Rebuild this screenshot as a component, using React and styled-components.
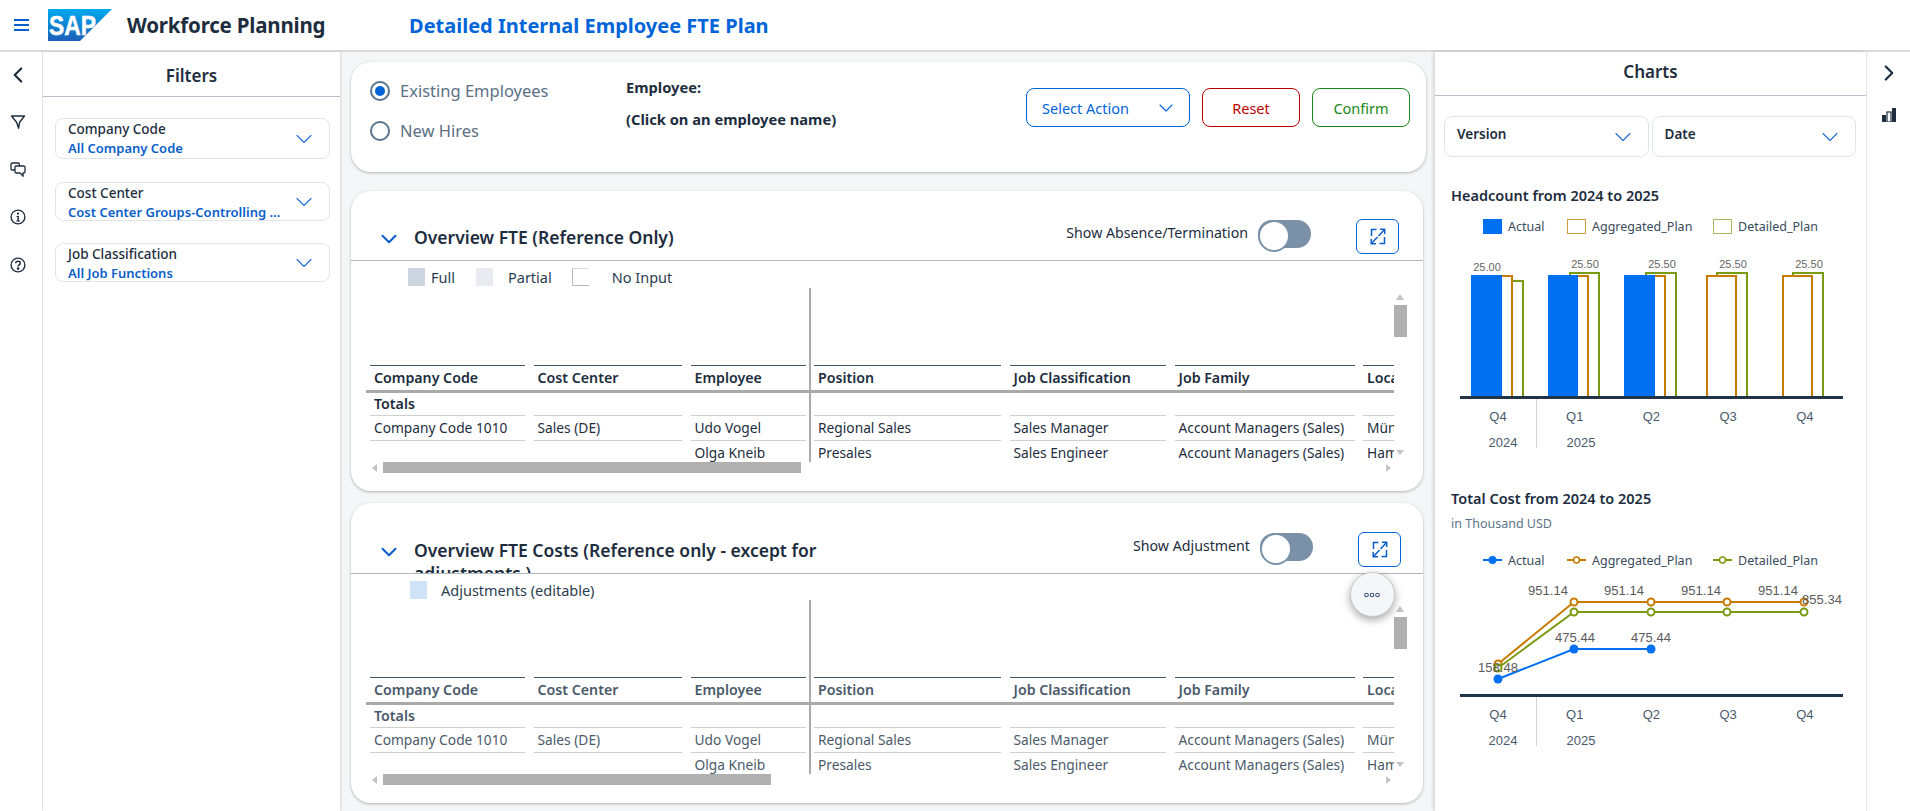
import React from "react";
import styled, { createGlobalStyle } from "styled-components";
import { ChevronLeft, ChevronRight, ChevronDown } from "lucide-react";

const Global = createGlobalStyle`
  html, body { margin: 0; padding: 0; height: 100%; background: #fff; }
  * { box-sizing: border-box; }
  body { font-family: "Noto Sans", "Open Sans", Arial, sans-serif; color: #1d2d3e; }
`;

const Page = styled.div`
  width: 1910px; height: 811px; overflow: hidden;
  display: flex; flex-direction: column; background: #fff;
`;
const TopBar = styled.header`
  height: 52px; flex: none; display: flex; align-items: center;
  border-bottom: 2px solid #d9d9d9; padding-left: 14px; background: #fff;
`;
const Burger = styled.div`
  width: 15px; display: flex; flex-direction: column; gap: 3px; margin-right: 19px;
  span { height: 2px; background: #0a5ecb; display: block; }
`;
const AppName = styled.div`
  margin-left: 15px; width: 282px; font-size: 20.5px; font-weight: 700; letter-spacing: -0.2px; color: #1d2d3e; white-space: nowrap;
`;
const PageTitle = styled.div`
  font-size: 20px; font-weight: 700; color: #0064d9; white-space: nowrap;
`;
const Body = styled.div`
  flex: 1; display: flex; min-height: 0;
`;
const Rail = styled.nav`
  flex: none; width: ${p => p.$w}px; background: #fff;
  display: flex; flex-direction: column; align-items: center;
  border-${p => p.$side}: 1px solid #e5e5e5; padding-top: ${p => p.$top}px; padding-right: ${p => p.$pr || 0}px; color: #1d2d3e;
`;
const RailIcon = styled.div`
  height: ${p => p.$h || 48}px; display: flex; align-items: flex-start; justify-content: center;
`;
const SidePanel = styled.aside`
  flex: none; width: ${p => p.$w}px; background: #fff; display: flex; flex-direction: column;
  ${p => p.$shadow ? "box-shadow: -2px 0 3px rgba(0,0,0,.12);" : "box-shadow: 1px 0 2px rgba(0,0,0,.12);"}
  position: relative;
`;
const PanelTitle = styled.div`
  height: ${p => p.$h}px; flex: none; border-bottom: 1px solid #b6c0cb;
  display: flex; align-items: center; justify-content: center;
  padding: ${p => p.$pt || 0}px 0 ${p => p.$pb || 0}px;
  font-size: 17px; font-weight: 600; color: #1d2d3e;
`;
const FilterList = styled.div`
  padding: 21px 10px 0 12px; display: flex; flex-direction: column; gap: 22px;
`;
const FilterBox = styled.div`
  height: ${p => p.$h}px; margin-bottom: ${p => p.$mb || 0}px; border: 1px solid #e1e4e8; border-radius: 8px; background: #fff;
  padding: ${p => p.$pt}px 12px 0 12px; position: relative; overflow: hidden;
  line-height: 19px; font-size: 13px;
`;
const FilterLabel = styled.div`
  font-weight: 500; font-size: 13.5px; color: #1d2d3e; white-space: nowrap;
`;
const FilterValue = styled.div`
  font-weight: 600; color: #0a5ecb; white-space: nowrap;
`;
const Caret = styled(ChevronDown)`
  position: absolute; right: ${p => p.$r || 11}px; top: 50%; margin-top: -14px; color: #2a6fd8;
`;
const Main = styled.main`
  flex: 1; min-width: 0; background: #f5f6f7; padding: 10px 9px 0 11px;
  display: flex; flex-direction: column;
`;
const Card = styled.section`
  background: #fff; border-radius: 20px; box-shadow: 0 1px 3px rgba(0,0,0,.28);
  flex: none; height: ${p => p.$h}px; margin: 0 ${p => p.$mr || 0}px ${p => p.$mb || 0}px 0; position: relative;
`;
const ActionCard = styled(Card)`
  display: flex; padding: 0 16px 0 19px;
`;
const RadioCol = styled.div`
  width: 256px; flex: none; padding-top: 18px; display: flex; flex-direction: column; gap: 19px;
`;
const RadioRow = styled.label`
  display: flex; align-items: center; gap: 10px; height: 21px;
  font-size: 16.5px; color: #5b6f85; white-space: nowrap;
`;
const RadioDot = styled.span`
  width: 20px; height: 20px; border-radius: 50%; border: 2px solid #5b738b; flex: none;
  display: flex; align-items: center; justify-content: center;
  &::after { content: ""; width: 10px; height: 10px; border-radius: 50%; background: ${p => p.$on ? "#0064d9" : "transparent"}; }
`;
const EmployeeCol = styled.div`
  flex: 1; padding-top: 16px; font-size: 14.7px; font-weight: 700; color: #1d2d3e;
  display: flex; flex-direction: column; gap: 13px; line-height: 19px; white-space: nowrap;
`;
const Actions = styled.div`
  display: flex; gap: 12px; padding-top: 26px; flex: none;
`;
const ActionBtn = styled.button`
  height: 39px; width: ${p => p.$w}px; border: 1px solid ${p => p.$c}; border-radius: 8px; background: #fff;
  color: ${p => p.$c}; font: 400 14.5px "Noto Sans", sans-serif; padding: 0;
  display: flex; align-items: center; justify-content: ${p => p.$split ? "space-between" : "center"};
  ${p => p.$split && "padding: 0 11px 0 15px;"}
`;
const CardHead = styled.div`
  height: ${p => p.$h}px; border-bottom: 1px solid #aeb8c3; display: flex; align-items: flex-start;
  padding: ${p => p.$top}px ${p => p.$r}px 0 25px; overflow: hidden;
`;
const Collapse = styled(ChevronDown)`
  flex: none; color: #0a5ecb; margin: 7px 12px 0 0;
`;
const SectionTitle = styled.h2`
  margin: 0; padding-top: 7px; width: 470px; font-size: 17.5px; font-weight: 600; line-height: 23px; color: #1d2d3e;
`;
const HeadRight = styled.div`
  margin-left: auto; display: flex; align-items: flex-start; gap: 45px; flex: none;
`;
const ToggleGroup = styled.div`
  display: flex; align-items: flex-start; gap: 10px; padding-top: 1px;
  font-size: 14.2px; color: #1d2d3e; line-height: 26px; white-space: nowrap;
`;
const Toggle = styled.span`
  width: 53px; height: 28px; border-radius: 14px; background: #7b91a8; display: block; position: relative; flex: none;
  &::after { content: ""; position: absolute; left: 0; top: 0; width: 28px; height: 28px; border-radius: 50%; background: #fff; border: 2px solid #7b91a8; }
`;
const ExpandBtn = styled.button`
  width: 43px; height: 35px; border: 1px solid #0064d9; border-radius: 6px; background: #fff; padding: 0;
  display: flex; align-items: center; justify-content: center;
`;
const Legend = styled.div`
  height: ${p => p.$h}px; display: flex; align-items: flex-start; padding: 7px 0 0 ${p => p.$l}px; line-height: 18px;
  font-size: 14.5px; color: #2b3d50;
`;
const LegendItem = styled.span`
  display: flex; align-items: center; gap: ${p => p.$gap}px; margin-right: ${p => p.$mr || 0}px; white-space: nowrap;
`;
const Swatch = styled.i`
  width: 17px; height: 18px; display: block; background: ${p => p.$bg};
  ${p => p.$open && "border-left: 1px solid #aeb8c3; border-bottom: 1px solid #aeb8c3; border-top: 1px solid #d5dae0;"}
`;
const TableWrap = styled.div`
  position: relative; height: 185px; margin-left: 15px; width: 1045px;
`;
const Frame = styled.div`
  height: 174px; width: 1028px; overflow: hidden; padding-top: 77px;
`;
const Row = styled.div`
  display: grid; grid-template-columns: 155px 148.5px 115px 187px 156.5px 180px 32px; column-gap: 8.5px;
  padding-left: 4px; height: ${p => p.$h}px;
`;
const Cell = styled.div`
  font-size: ${p => p.$b ? 14.2 : 13.75}px; font-weight: ${p => p.$b ? 600 : 400}; color: ${p => p.$dim ? "#4b5a6a" : "#1d2d3e"};
  border-top: ${p => p.$line}; padding: 0 0 2px 4px; overflow: hidden; white-space: nowrap;
  display: flex; align-items: center;
`;
const HeavyRule = styled.div`
  height: 3px; background: #aaaaaa; width: 1028px;
`;
const FreezeLine = styled.div`
  position: absolute; left: 442.5px; top: 0; width: 2px; height: 174px; background: #aaaaaa;
`;
const HThumb = styled.div`
  position: absolute; left: 17px; top: 174px; height: 11px; background: #b0b0b0;
`;
const VThumb = styled.div`
  position: absolute; left: 1028px; top: 17px; width: 13px; height: 32px; background: #b0b0b0;
`;
const ScrollArrow = styled.i`
  position: absolute; left: ${p => p.$x}px; top: ${p => p.$y}px; width: 0; height: 0; display: block;
  ${p => ({
    up: "border-left: 4px solid transparent; border-right: 4px solid transparent; border-bottom: 6px solid #c4c4c4;",
    down: "border-left: 4px solid transparent; border-right: 4px solid transparent; border-top: 5px solid #c4c4c4;",
    left: "border-top: 4px solid transparent; border-bottom: 4px solid transparent; border-right: 5px solid #c4c4c4;",
    right: "border-top: 4px solid transparent; border-bottom: 4px solid transparent; border-left: 5px solid #c4c4c4;",
  }[p.$dir])}
`;
const Fab = styled.button`
  position: absolute; right: 28.5px; top: 69px; width: 45px; height: 45px; border-radius: 50%;
  background: #f5f6f7; border: 1px solid #c9c9c9; box-shadow: 0 3px 8px rgba(0,0,0,.35); padding: 0;
  display: flex; align-items: center; justify-content: center; z-index: 2;
`;
const ChartSelects = styled.div`
  display: flex; gap: 3px; padding: 20px 10px 0 9px;
`;
const ChartSelect = styled.div`
  flex: 1; height: 41px; border: 1px solid #e1e4e8; border-radius: 8px; padding: 9px 12px;
  font-size: 13.5px; font-weight: 600; color: #1d2d3e; position: relative; line-height: 17px;
`;
const ChartBlock = styled.div`
  padding: ${p => p.$top}px 0 0 16px;
`;
const ChartTitle = styled.div`
  font-size: 14.5px; font-weight: 600; color: #1d2d3e; line-height: 20px; white-space: nowrap;
`;
const ChartSub = styled.div`
  font-size: 12.5px; color: #5b738b; line-height: 16px; margin-top: 8px;
`;
const ChartLegend = styled.div`
  display: flex; align-items: center; height: 20px; padding-left: 32px; margin-top: ${p => p.$mt}px;
  font-size: 12.5px; color: #3a4b5c; white-space: nowrap;
`;
const ChartLegendItem = styled.span`
  display: flex; align-items: center; gap: 6px; width: ${p => p.$w}px; flex: none;
`;
const LegendBox = styled.i`
  width: 19px; height: 15px; display: block; flex: none;
  ${p => p.$fill ? `background: ${p.$c};` : `border: 1.5px solid ${p.$c}; background:#fff;`}
`;
const ChartSvg = styled.svg`
  display: block; margin-left: -11px;
  text { font-family: "Liberation Sans", Arial, sans-serif; }
`;

const SapLogo = () => (
  <svg width="64" height="32" viewBox="0 0 64 32" style={{ flex: "none" }}>
    <defs>
      <linearGradient id="sapg" x1="0" y1="0" x2="0" y2="1">
        <stop offset="0" stopColor="#00a9ee" />
        <stop offset="1" stopColor="#1c5fb9" />
      </linearGradient>
    </defs>
    <polygon points="0,0 64,0 32,32 0,32" fill="url(#sapg)" />
    <text x="1" y="26" fontFamily="Liberation Sans" fontWeight="700" fontSize="27" fill="#fff" stroke="#fff" strokeWidth=".5" textLength="47" lengthAdjust="spacingAndGlyphs">SAP</text>
  </svg>
);
const FunnelIcon = () => (
  <svg width="16" height="16" viewBox="0 0 16 16" fill="none" stroke="#1d2d3e" strokeWidth="1.4">
    <path d="M1.5 2h13L9.6 8.2 8.6 14.2 6.6 8.2z" strokeLinejoin="round" />
  </svg>
);
const ChatIcon = () => (
  <svg width="16" height="16" viewBox="0 0 16 16" fill="none" stroke="#1d2d3e" strokeWidth="1.3">
    <path d="M5 9H2.2A1.2 1.2 0 0 1 1 7.8V3.2A1.2 1.2 0 0 1 2.2 2h6A1.2 1.2 0 0 1 9.4 3.2V5" />
    <path d="M6.2 5h7.6A1.2 1.2 0 0 1 15 6.2v4.6a1.2 1.2 0 0 1-1.2 1.2h-.8v3l-3-3H6.2A1.2 1.2 0 0 1 5 10.8V6.2A1.2 1.2 0 0 1 6.2 5z" />
  </svg>
);
const InfoIcon = () => (
  <svg width="16" height="16" viewBox="0 0 16 16">
    <circle cx="8" cy="8" r="6.9" fill="none" stroke="#1d2d3e" strokeWidth="1.4" />
    <circle cx="8" cy="4.7" r="1.1" fill="#1d2d3e" />
    <path d="M6.5 7h2.4v4.4H10v1H6.2v-1h1.2V8H6.5z" fill="#1d2d3e" />
  </svg>
);
const HelpIcon = () => (
  <svg width="16" height="16" viewBox="0 0 16 16" fill="none" stroke="#1d2d3e" strokeWidth="1.4">
    <circle cx="8" cy="8" r="6.9" />
    <path d="M5.7 6.2C5.8 4.9 6.8 4.2 8 4.2c1.3 0 2.3.8 2.3 2 0 1.7-2.2 1.7-2.2 3.4" />
    <circle cx="8.1" cy="11.6" r=".6" fill="#1d2d3e" />
  </svg>
);
const BarsIcon = () => (
  <svg width="14" height="14" viewBox="0 0 14 14">
    <rect x="0" y="7" width="4" height="7" fill="#1d2d3e" />
    <rect x="5" y="4" width="4" height="10" fill="#fff" stroke="#1d2d3e" strokeWidth="1.2" />
    <rect x="10" y="0" width="4" height="14" fill="#1d2d3e" />
  </svg>
);
const ExpandIcon = () => (
  <svg width="16" height="17" viewBox="0 0 16 17" fill="none" stroke="#0a5ecb" strokeWidth="1.5">
    <path d="M6.5 1.5H1.5V8" />
    <path d="M9.5 15.5H14.5V9" />
    <path d="M8.5 8L14.5 1.5M10 1.2h4.7v4.8" />
    <path d="M7.5 9L1.5 15.5M6 15.8H1.2V11" />
  </svg>
);
const Dots = () => (
  <svg width="16" height="6" viewBox="0 0 16 6" fill="none" stroke="#3d5a80" strokeWidth="1.1">
    <circle cx="2.5" cy="3" r="1.8" /><circle cx="8" cy="3" r="1.8" /><circle cx="13.5" cy="3" r="1.8" />
  </svg>
);

const COLS = ["Company Code", "Cost Center", "Employee", "Position", "Job Classification", "Job Family", "Location"];
const ROW1 = ["Company Code 1010", "Sales (DE)", "Udo Vogel", "Regional Sales", "Sales Manager", "Account Managers (Sales)", "München"];
const ROW2 = ["", "", "Olga Kneib", "Presales", "Sales Engineer", "Account Managers (Sales)", "Hamburg"];

const DataTable = ({ thumb, dim }) => (
  <TableWrap>
    <Frame>
      <Row $h={25}>{COLS.map(c => <Cell key={c} $b $dim={dim} $line="1.5px solid #40566d">{c}</Cell>)}</Row>
      <HeavyRule />
      <Row $h={22}>{COLS.map((c, i) => <Cell key={c} $b $dim={dim} $line="0">{i === 0 ? "Totals" : ""}</Cell>)}</Row>
      <Row $h={25}>{ROW1.map((c, i) => <Cell key={i} $dim={dim} $line="1px solid #cfcfcf">{c}</Cell>)}</Row>
      <Row $h={25}>{ROW2.map((c, i) => <Cell key={i} $dim={dim} $line="1px solid #cfcfcf">{c}</Cell>)}</Row>
    </Frame>
    <FreezeLine />
    <VThumb />
    <ScrollArrow $dir="up" $x={1030} $y={6} />
    <ScrollArrow $dir="down" $x={1030} $y={162} />
    <HThumb style={{ width: thumb }} />
    <ScrollArrow $dir="left" $x={6} $y={176} />
    <ScrollArrow $dir="right" $x={1020} $y={176} />
  </TableWrap>
);

const BLUE = "#0070f2", ORANGE = "#c87b00", GREEN = "#7a9a12", AXIS = "#223548";
/* chart-local x = page x - 1440 */
const bars = [
  { a: [31, 62], g: [57, 72], d: [72, 83], dTop: 281 },
  { a: [108, 138], g: [133, 148], d: [130, 159], dTop: 273 },
  { a: [184, 215], g: [209, 225], d: [206, 236], dTop: 273 },
  { g: [267, 296], d: [277, 307], dTop: 273 },
  { g: [343, 372], d: [353, 383], dTop: 273 },
];
const AxisLabels = ({ base }) => (
  <g fontSize="13" fill="#4a5a6a">
    <rect x="20" y={base - 1} width="383" height="3" fill={AXIS} />
    <line x1="96.5" x2="96.5" y1={base + 2} y2={base + 51} stroke="#d5d5d5" />
    {["Q4", "Q1", "Q2", "Q3", "Q4"].map((q, i) => (
      <text key={i} x={58 + i * 76.7} y={base + 24} textAnchor="middle">{q}</text>
    ))}
    <text x="63" y={base + 50} textAnchor="middle">2024</text>
    <text x="141" y={base + 50} textAnchor="middle">2025</text>
  </g>
);
const HeadcountChart = () => {
  const Y = 236, base = 397 - Y;
  return (
    <ChartSvg width="420" height="220" viewBox="0 0 420 220">
      {bars.map((b, i) => (
        <g key={i} fill="#fff" strokeWidth="2">
          <path d={`M${b.d[0]} ${base}V${b.dTop - Y}H${b.d[1]}V${base}`} stroke={GREEN} />
          <path d={`M${b.g[0]} ${base}V${276 - Y}H${b.g[1]}V${base}`} stroke={ORANGE} />
          {b.a && <rect x={b.a[0]} y={275 - Y} width={b.a[1] - b.a[0]} height={base - 275 + Y} fill={BLUE} stroke="none" />}
        </g>
      ))}
      <g fontSize="11" fill="#666" textAnchor="middle">
        <text x="47" y={271 - Y}>25.00</text>
        {[145, 222, 293, 369].map(x => <text key={x} x={x} y={268 - Y}>25.50</text>)}
      </g>
      <AxisLabels base={base} />
    </ChartSvg>
  );
};
const pts = [58, 134, 211, 287, 364];
const Line = ({ ys, color, solid }) => (
  <g>
    <polyline points={ys.map((y, i) => `${pts[i]},${y}`).join(" ")} fill="none" stroke={color} strokeWidth="2" />
    {ys.map((y, i) => (
      <circle key={i} cx={pts[i]} cy={y} r={solid ? 4.5 : 3.5} fill={solid ? color : "#fff"} stroke={color} strokeWidth={solid ? 0 : 2} />
    ))}
  </g>
);
const CostChart = () => {
  const Y = 570;
  const g = [664, 602, 602, 602, 602].map(v => v - Y);
  const d = [668, 612, 612, 612, 612].map(v => v - Y);
  const a = [679, 649, 649].map(v => v - Y);
  return (
    <ChartSvg width="420" height="190" viewBox="0 0 420 190">
      <Line ys={g} color={ORANGE} />
      <Line ys={d} color={GREEN} />
      <Line ys={a} color={BLUE} solid />
      <g fontSize="13" fill="#5a5a5a" textAnchor="middle">
        {[108, 184, 261, 338].map(x => <text key={x} x={x} y={595 - Y}>951.14</text>)}
        <text x="382" y={604 - Y}>855.34</text>
        <text x="135" y={642 - Y}>475.44</text>
        <text x="211" y={642 - Y}>475.44</text>
        <text x="58" y={672 - Y}>158.48</text>
      </g>
      <AxisLabels base={695 - Y} />
    </ChartSvg>
  );
};
const LineKey = ({ c, solid }) => (
  <svg width="19" height="10" viewBox="0 0 19 10" style={{ flex: "none" }}>
    <line x1="0" x2="19" y1="5" y2="5" stroke={c} strokeWidth="2" />
    <circle cx="9.5" cy="5" r={solid ? 4 : 3} fill={solid ? c : "#fff"} stroke={c} strokeWidth={solid ? 0 : 1.5} />
  </svg>
);

export default function App() {
  return (
    <Page>
      <Global />
      <TopBar>
        <Burger><span /><span /><span /></Burger>
        <SapLogo />
        <AppName>Workforce Planning</AppName>
        <PageTitle>Detailed Internal Employee FTE Plan</PageTitle>
      </TopBar>
      <Body>
        <Rail $w={43} $side="right" $top={10} $pr={7}>
          <RailIcon $h={52}><ChevronLeft size={26} strokeWidth={2} /></RailIcon>
          <RailIcon $h={47}><FunnelIcon /></RailIcon>
          <RailIcon $h={48}><ChatIcon /></RailIcon>
          <RailIcon $h={48}><InfoIcon /></RailIcon>
          <RailIcon><HelpIcon /></RailIcon>
        </Rail>
        <SidePanel $w={297}>
          <PanelTitle $h={45} $pt={2}>Filters</PanelTitle>
          <FilterList>
            <FilterBox $h={41} $pt={1} $mb={1}>
              <FilterLabel>Company Code</FilterLabel>
              <FilterValue>All Company Code</FilterValue>
              <Caret size={28} strokeWidth={1} />
            </FilterBox>
            <FilterBox $h={39} $pt={1}>
              <FilterLabel>Cost Center</FilterLabel>
              <FilterValue>Cost Center Groups-Controlling ...</FilterValue>
              <Caret size={28} strokeWidth={1} />
            </FilterBox>
            <FilterBox $h={39} $pt={1}>
              <FilterLabel>Job Classification</FilterLabel>
              <FilterValue>All Job Functions</FilterValue>
              <Caret size={28} strokeWidth={1} />
            </FilterBox>
          </FilterList>
        </SidePanel>
        <Main>
          <ActionCard $h={110} $mb={19}>
            <RadioCol>
              <RadioRow><RadioDot $on />Existing Employees</RadioRow>
              <RadioRow><RadioDot />New Hires</RadioRow>
            </RadioCol>
            <EmployeeCol>
              <div>Employee:</div>
              <div>(Click on an employee name)</div>
            </EmployeeCol>
            <Actions>
              <ActionBtn $w={164} $c="#0064d9" $split>Select Action<ChevronDown size={24} strokeWidth={1.1} /></ActionBtn>
              <ActionBtn $w={98} $c="#bb0000">Reset</ActionBtn>
              <ActionBtn $w={98} $c="#188918">Confirm</ActionBtn>
            </Actions>
          </ActionCard>
          <Card $h={300} $mr={3} $mb={12}>
            <CardHead $h={70} $top={28} $r={24}>
              <Collapse size={26} strokeWidth={1.9} />
              <SectionTitle>Overview FTE (Reference Only)</SectionTitle>
              <HeadRight>
                <ToggleGroup>Show Absence/Termination<Toggle /></ToggleGroup>
                <ExpandBtn><ExpandIcon /></ExpandBtn>
              </HeadRight>
            </CardHead>
            <Legend $h={27} $l={57}>
              <LegendItem $gap={6} $mr={21}><Swatch $bg="#cdd5e0" />Full</LegendItem>
              <LegendItem $gap={15} $mr={20}><Swatch $bg="#e8ebf0" />Partial</LegendItem>
              <LegendItem $gap={23}><Swatch $open />No Input</LegendItem>
            </Legend>
            <DataTable thumb={418} />
          </Card>
          <Card $h={300} $mr={3}>
            <CardHead $h={71} $top={29} $r={22}>
              <Collapse size={26} strokeWidth={1.9} />
              <SectionTitle>Overview FTE Costs (Reference only - except for adjustments )</SectionTitle>
              <HeadRight>
                <ToggleGroup>Show Adjustment<Toggle /></ToggleGroup>
                <ExpandBtn><ExpandIcon /></ExpandBtn>
              </HeadRight>
            </CardHead>
            <Legend $h={26} $l={59}>
              <LegendItem $gap={14}><Swatch $bg="#cfe2f7" />Adjustments (editable)</LegendItem>
            </Legend>
            <DataTable thumb={388} dim />
            <Fab><Dots /></Fab>
          </Card>
        </Main>
        <SidePanel $w={431} $shadow>
          <PanelTitle $h={44} $pb={4}>Charts</PanelTitle>
          <ChartSelects>
            <ChartSelect>Version<Caret size={28} strokeWidth={1} /></ChartSelect>
            <ChartSelect>Date<Caret size={28} strokeWidth={1} /></ChartSelect>
          </ChartSelects>
          <ChartBlock $top={28}>
            <ChartTitle>Headcount from 2024 to 2025</ChartTitle>
            <ChartLegend $mt={11}>
              <ChartLegendItem $w={84}><LegendBox $fill $c={BLUE} />Actual</ChartLegendItem>
              <ChartLegendItem $w={146}><LegendBox $c="#d69a3a" />Aggregated_Plan</ChartLegendItem>
              <ChartLegendItem $w={130}><LegendBox $c="#a3b85c" />Detailed_Plan</ChartLegendItem>
            </ChartLegend>
            <HeadcountChart />
          </ChartBlock>
          <ChartBlock $top={32}>
            <ChartTitle>Total Cost from 2024 to 2025</ChartTitle>
            <ChartSub>in Thousand USD</ChartSub>
            <ChartLegend $mt={18}>
              <ChartLegendItem $w={84}><LineKey c={BLUE} solid />Actual</ChartLegendItem>
              <ChartLegendItem $w={146}><LineKey c={ORANGE} />Aggregated_Plan</ChartLegendItem>
              <ChartLegendItem $w={130}><LineKey c={GREEN} />Detailed_Plan</ChartLegendItem>
            </ChartLegend>
            <CostChart />
          </ChartBlock>
        </SidePanel>
        <Rail $w={44} $side="left" $top={8}>
          <RailIcon $h={48}><ChevronRight size={26} strokeWidth={2} /></RailIcon>
          <RailIcon><BarsIcon /></RailIcon>
        </Rail>
      </Body>
    </Page>
  );
}
